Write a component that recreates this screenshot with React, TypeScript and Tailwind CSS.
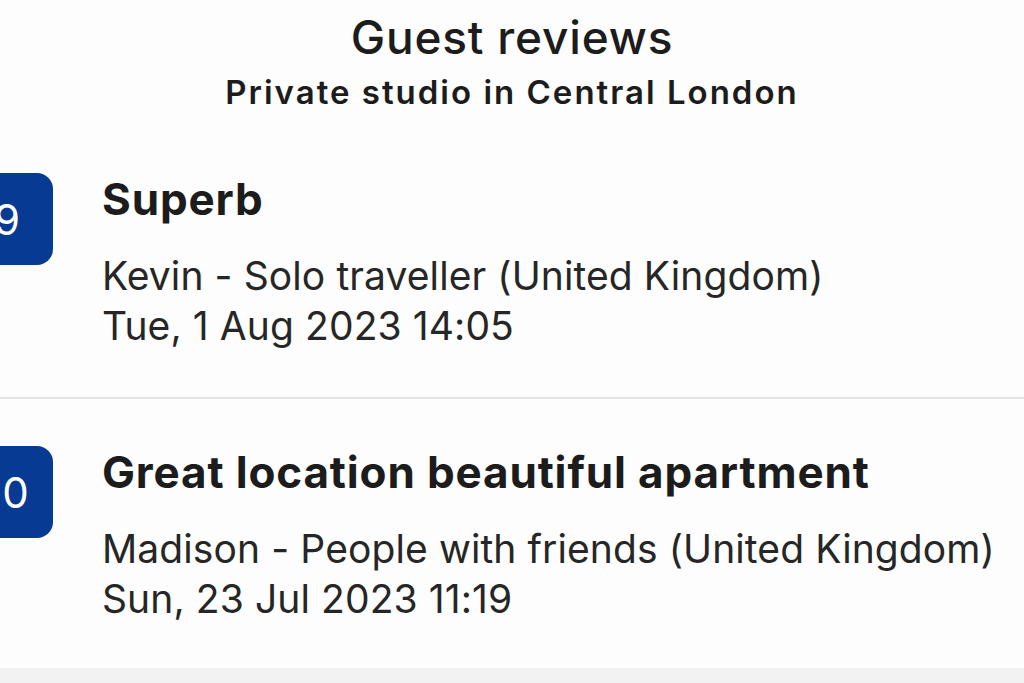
const reviews = [
  {
    score: "9",
    title: "Superb",
    author: "Kevin - Solo traveller (United Kingdom)",
    date: "Tue, 1 Aug 2023 14:05",
  },
  {
    score: "10",
    title: "Great location beautiful apartment",
    author: "Madison - People with friends (United Kingdom)",
    date: "Sun, 23 Jul 2023 11:19",
  },
];

const ReviewRow = ({ review, className }: { review: (typeof reviews)[number]; className: string }) => (
  <div className={`flex items-start ${className}`}>
    <div className="-ml-[39px] mt-[2px] w-[92px] h-[92px] shrink-0 rounded-[16px] bg-[#073a92] flex items-center justify-center text-white text-[42px]">
      {review.score}
    </div>
    <div className="ml-[49px] flex flex-col">
      <h2 className="text-[44px] leading-[56px] font-bold text-[#1c1c1c] tracking-[0.85px]">{review.title}</h2>
      <p className="mt-[24px] text-[39px] leading-[50px] text-[#262626] tracking-[0.1px]">{review.author}</p>
      <p className="text-[39px] leading-[50px] text-[#262626] tracking-[0.1px]">{review.date}</p>
    </div>
  </div>
);

export default function App() {
  return (
    <div
      className="w-[1024px] h-[683px] overflow-hidden bg-[#fdfdfd] flex flex-col"
      style={{ fontFamily: "Inter, 'Noto Sans', sans-serif" }}
    >
      <header className="flex flex-col items-center pt-[9px]">
        <h1 className="text-[46px] leading-[56px] font-medium text-[#1c1c1c] tracking-[0.8px]">Guest reviews</h1>
        <p className="text-[33px] leading-[54px] font-semibold text-[#1c1c1c] tracking-[2px]">Private studio in Central London</p>
      </header>

      <ReviewRow review={reviews[0]} className="pt-[52px] pb-[46px]" />
      <div className="h-[2px] bg-[#e3e3e3]" />
      <ReviewRow review={reviews[1]} className="pt-[45px] pb-[44px]" />

      <div className="flex-1 bg-[#f2f2f2]" />
    </div>
  );
}
